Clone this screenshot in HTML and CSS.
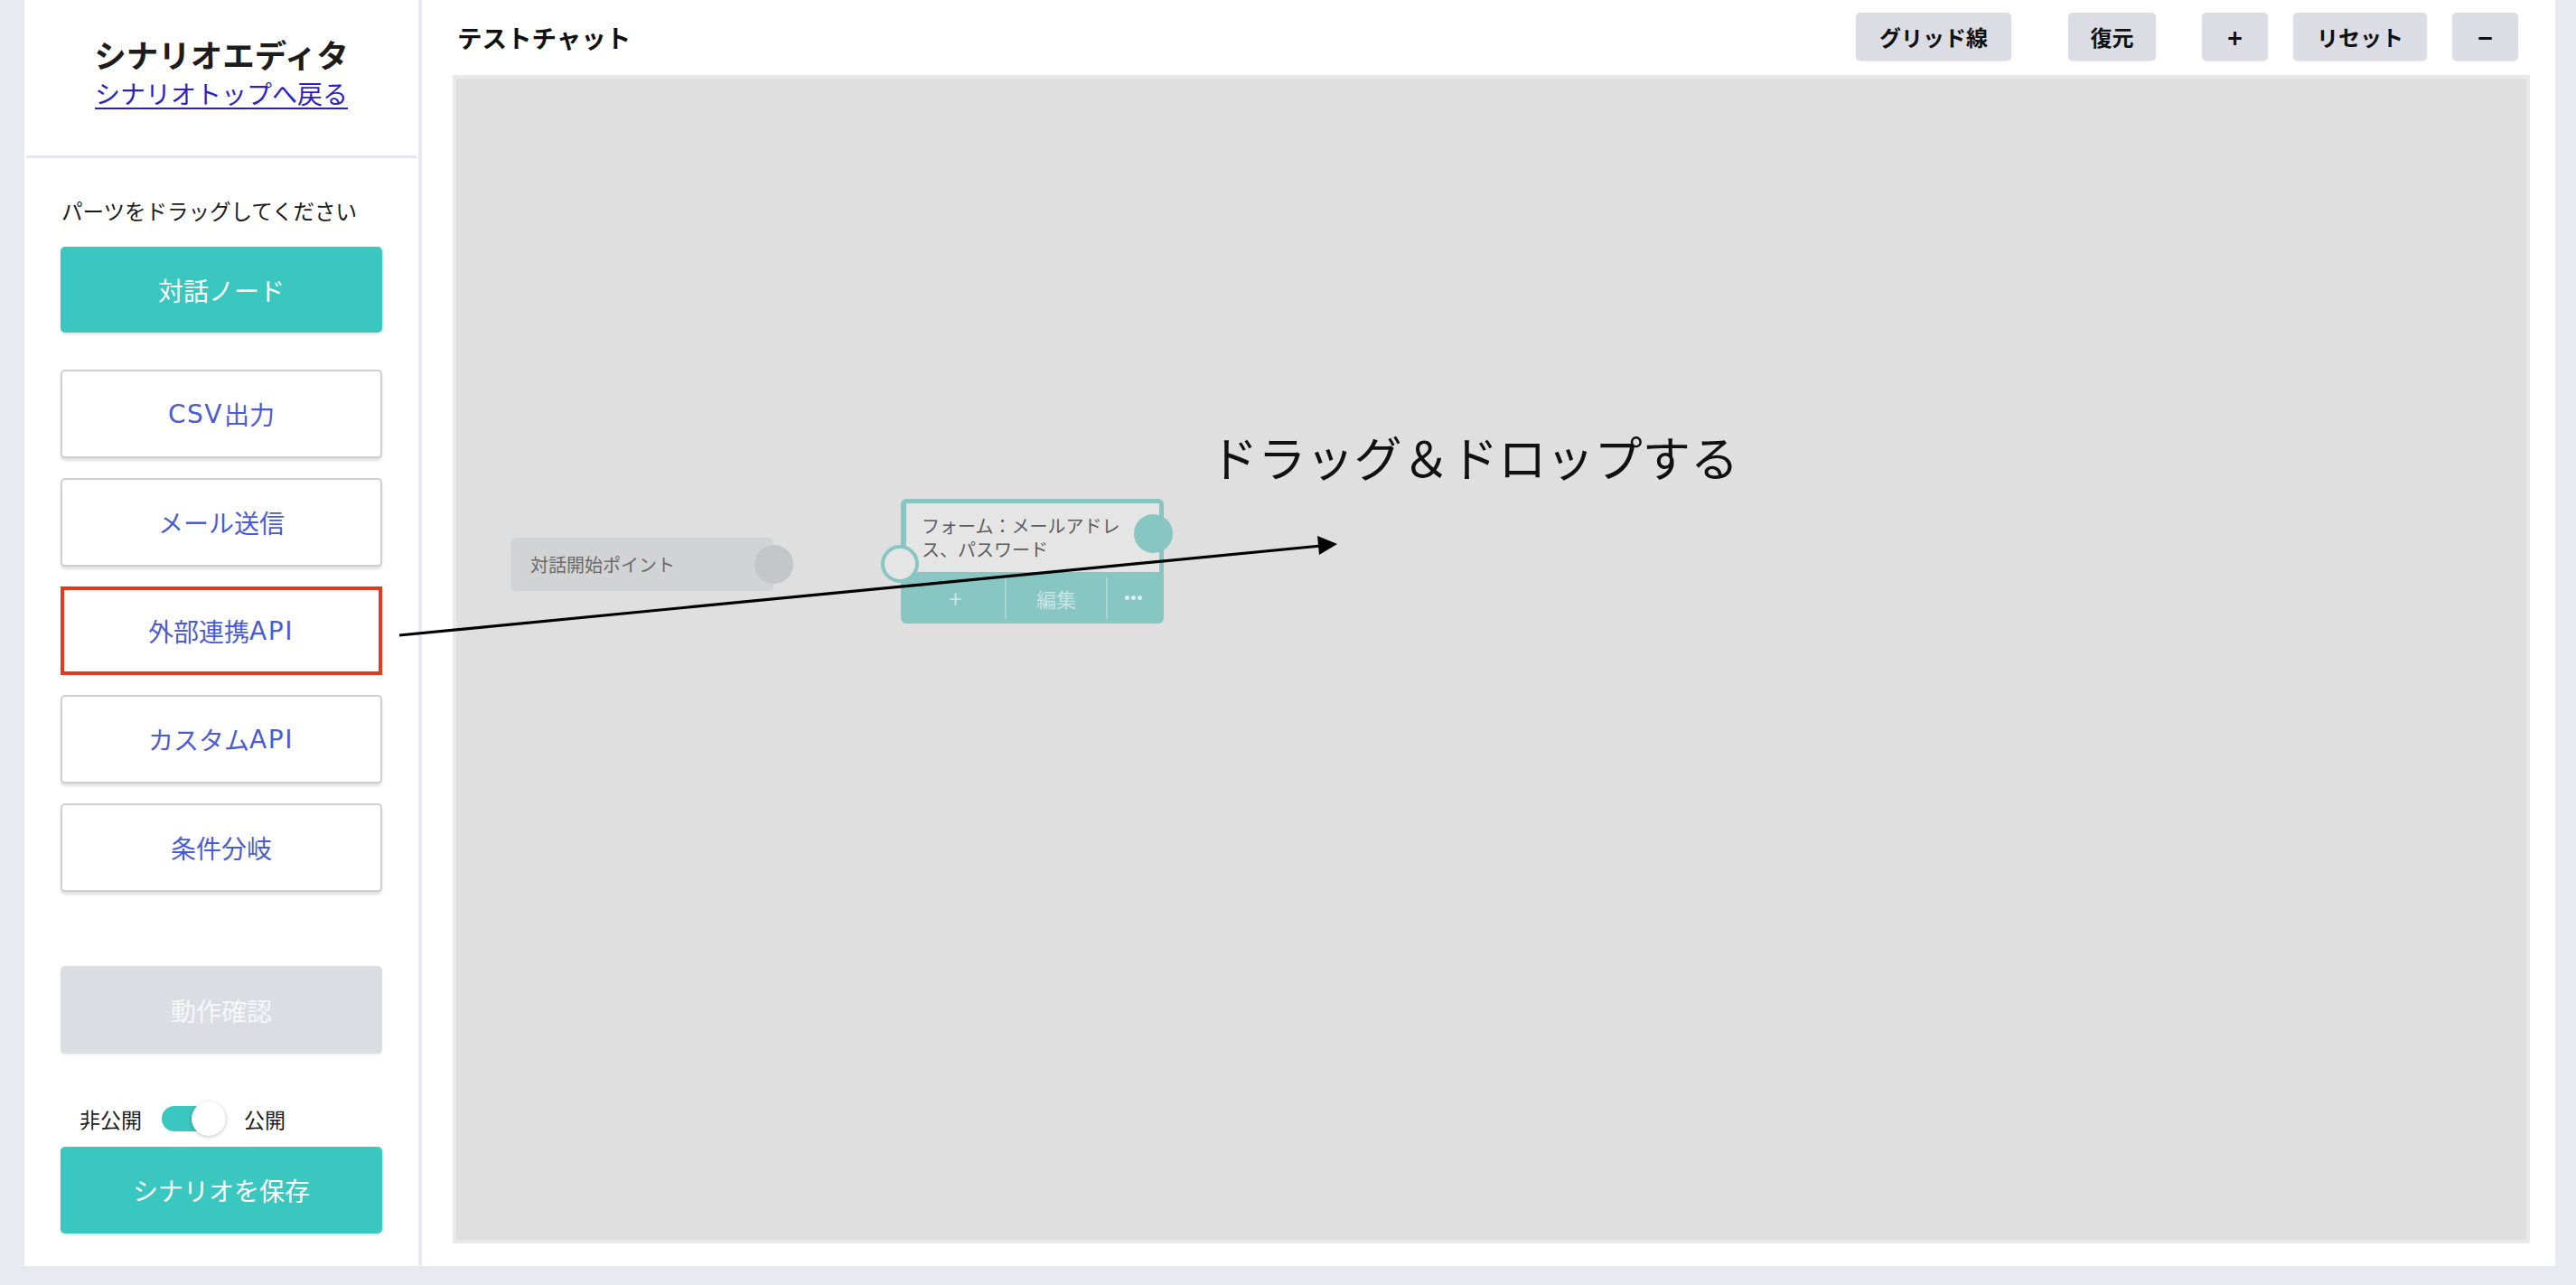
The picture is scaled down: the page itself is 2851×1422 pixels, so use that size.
FILE: index.html
```html
<!DOCTYPE html>
<html lang="ja">
<head>
<meta charset="utf-8">
<title>シナリオエディタ</title>
<link rel="stylesheet" href="styles.css">
</head>
<body>
<div class="app">
  <aside class="sidebar">
    <div class="sidebar-head">
      <h1 class="title">シナリオエディタ</h1>
      <a class="back-link" href="#">シナリオトップへ戻る</a>
    </div>
    <div class="parts">
      <p class="hint">パーツをドラッグしてください</p>
      <div class="btn btn-primary btn-node">対話ノード</div>
      <div class="part-list">
        <div class="btn btn-part"><span class="latin">CSV</span>出力</div>
        <div class="btn btn-part">メール送信</div>
        <div class="btn btn-part btn-highlight">外部連携<span class="latin">API</span></div>
        <div class="btn btn-part">カスタム<span class="latin">API</span></div>
        <div class="btn btn-part">条件分岐</div>
      </div>
      <div class="btn btn-disabled">動作確認</div>
      <div class="publish-row">
        <span class="publish-label">非公開</span>
        <span class="toggle"><span class="knob"></span></span>
        <span class="publish-label">公開</span>
      </div>
      <div class="btn btn-primary btn-save">シナリオを保存</div>
    </div>
  </aside>
  <main class="main">
    <header class="main-head">
      <h2 class="main-title">テストチャット</h2>
      <div class="tools">
        <button class="tool tool-grid">グリッド線</button>
        <button class="tool tool-restore">復元</button>
        <button class="tool tool-plus">+</button>
        <button class="tool tool-reset">リセット</button>
        <button class="tool tool-minus">−</button>
      </div>
    </header>
    <div class="canvas">
      <div class="node-start">
        <span class="node-start-label">対話開始ポイント</span>
        <span class="port port-start"></span>
      </div>
      <div class="node-form">
        <div class="node-form-body">フォーム：メールアドレ<br>ス、パスワード</div>
        <div class="node-form-actions">
          <span class="action action-add">+</span>
          <span class="action action-edit">編集</span>
          <span class="action action-more"><i class="dot"></i><i class="dot"></i><i class="dot"></i></span>
        </div>
        <span class="port port-in"></span>
        <span class="port port-out"></span>
      </div>
      <div class="drop-hint">ドラッグ＆ドロップする</div>
    </div>
  </main>
</div>
<svg class="drag-arrow" width="2851" height="1422" viewBox="0 0 2851 1422" xmlns="http://www.w3.org/2000/svg">
  <line x1="442" y1="703" x2="1462" y2="604" stroke="#000" stroke-width="3.2"/>
  <polygon points="1480,602 1458,593 1460,614" fill="#000"/>
</svg>
</body>
</html>
```

FILE: styles.css
```css
* {
  box-sizing: border-box;
}

html, body {
  margin: 0;
  padding: 0;
}

body {
  position: relative;
  width: 2851px;
  height: 1422px;
  background: #e8e9f1;
  font-family: "Open Sans", "Noto Sans CJK JP", sans-serif;
  color: #1a1a1a;
  overflow: hidden;
}

.app {
  display: flex;
  gap: 4px;
  padding-left: 27px;
  height: 1401px;
}

/* ---------- Sidebar ---------- */
.sidebar {
  width: 436px;
  height: 1401px;
  background: #fff;
  display: flex;
  flex-direction: column;
}

.sidebar-head {
  margin: 0 2px;
  padding-top: 38px;
  padding-bottom: 51px;
  border-bottom: 3px solid #e6e7ee;
  display: flex;
  flex-direction: column;
  align-items: center;
}

.title {
  margin: 0;
  font-family: "Noto Sans CJK JP", sans-serif;
  font-size: 35.5px;
  line-height: 44px;
  font-weight: 700;
  color: #1c1c1c;
}

.back-link {
  margin-top: 3px;
  font-family: "Noto Sans CJK JP", sans-serif;
  font-size: 28px;
  line-height: 36px;
  color: #2c1fc4;
  text-decoration: underline;
  text-underline-offset: 4px;
  text-decoration-thickness: 2px;
}

.parts {
  padding: 0 40px;
  display: flex;
  flex-direction: column;
}

.hint {
  margin: 42px 0 0 1px;
  font-family: "Noto Sans CJK JP", sans-serif;
  font-size: 23.5px;
  line-height: 32px;
  color: #1a1a1a;
}

.btn {
  display: flex;
  align-items: center;
  justify-content: center;
  font-family: "Noto Sans CJK JP", sans-serif;
  font-size: 28px;
  border-radius: 5px;
}

.latin {
  font-family: "DejaVu Sans", sans-serif;
  letter-spacing: 1.5px;
  margin-right: 1px;
}

.btn-primary {
  background: #3ac7bf;
  color: #fff;
  box-shadow: 0 2px 3px rgba(0, 0, 0, 0.12);
}

.btn-node {
  margin-top: 24px;
  height: 95px;
}

.part-list {
  margin-top: 41px;
  display: flex;
  flex-direction: column;
  gap: 22px;
}

.btn-part {
  height: 98px;
  background: #fff;
  border: 2px solid #cfcfd2;
  color: #4b5bd3;
  box-shadow: 0 3px 3px rgba(0, 0, 0, 0.12);
}

.btn-highlight {
  border: 4px solid #e2391f;
  border-radius: 0;
  box-shadow: none;
}

.btn-disabled {
  margin-top: 82px;
  height: 97px;
  background: #dcdde3;
  color: #f6f6f8;
  box-shadow: 0 2px 3px rgba(0, 0, 0, 0.06);
}

.publish-row {
  margin-top: 44px;
  height: 56px;
  padding-left: 21px;
  display: flex;
  align-items: center;
  font-family: "Noto Sans CJK JP", sans-serif;
  font-size: 23px;
  color: #1a1a1a;
}

.toggle {
  position: relative;
  margin: 0 20px 0 22px;
  width: 71px;
  height: 28px;
  border-radius: 14px;
  background: #3ac7bf;
}

.knob {
  position: absolute;
  right: 0;
  top: -5px;
  width: 38px;
  height: 38px;
  border-radius: 50%;
  background: #fff;
  box-shadow: 0 1px 4px rgba(0, 0, 0, 0.25);
}

.btn-save {
  margin-top: 3px;
  height: 96px;
}

/* ---------- Main ---------- */
.main {
  width: 2361px;
  height: 1401px;
  background: #fff;
  padding: 0 28px 25px 34px;
  display: flex;
  flex-direction: column;
}

.main-head {
  height: 83px;
  display: flex;
  align-items: center;
  justify-content: space-between;
  padding: 0 13px 0 5px;
}

.main-title {
  margin: 0;
  font-family: "Noto Sans CJK JP", sans-serif;
  font-size: 27.5px;
  font-weight: 700;
  color: #111;
  padding-bottom: 2px;
}

.tools {
  display: flex;
  align-items: center;
  padding-bottom: 2px;
}

.tool {
  height: 53px;
  border: none;
  border-radius: 5px;
  background: #dcdde4;
  box-shadow: 0 1px 2px rgba(0, 0, 0, 0.1);
  font-family: "Noto Sans CJK JP", sans-serif;
  font-size: 24px;
  font-weight: 700;
  color: #111;
  padding: 0;
}

.tool-grid { width: 172px; }
.tool-restore { width: 97px; margin-left: 63px; }
.tool-plus { width: 73px; margin-left: 51px; font-size: 28px; }
.tool-reset { width: 148px; margin-left: 28px; }
.tool-minus { width: 73px; margin-left: 28px; font-size: 28px; }

.canvas {
  position: relative;
  flex: 1;
  background: #dfdfdf;
  border: 4px solid #e9e9e9;
}

/* Nodes on the free canvas */
.node-start {
  position: absolute;
  left: 60px;
  top: 508px;
  width: 291px;
  height: 59px;
  background: #d2d3d5;
  border-radius: 6px;
  display: flex;
  align-items: center;
  padding-left: 22px;
}

.node-start-label {
  font-family: "Noto Sans CJK JP", sans-serif;
  font-size: 20px;
  color: #6a6a6c;
}

.port {
  position: absolute;
  border-radius: 50%;
}

.port-start {
  left: 270px;
  top: 8px;
  width: 43px;
  height: 43px;
  background: #c5c6c9;
}

.node-form {
  position: absolute;
  left: 492px;
  top: 465px;
  width: 291px;
  height: 138px;
  background: #87c6c3;
  border-radius: 6px;
  padding: 5px 5px 0 6px;
  display: flex;
  flex-direction: column;
}

.node-form-body {
  height: 76px;
  background: #e5e5e5;
  padding: 12px 0 0 17px;
  font-family: "Noto Sans CJK JP", sans-serif;
  font-size: 20px;
  line-height: 26px;
  color: #5c5c5c;
}

.node-form-actions {
  flex: 1;
  display: flex;
  align-items: center;
  color: #c8e5e3;
  font-family: "Noto Sans CJK JP", sans-serif;
  font-size: 22px;
}

.action {
  height: 46px;
  display: flex;
  align-items: center;
  justify-content: center;
}

.action-add { width: 111px; border-right: 2px solid #a8d6d3; font-size: 26px; }
.action-edit { width: 112px; border-right: 2px solid #a8d6d3; }
.action-more { flex: 1; gap: 2px; }

.dot {
  width: 5px;
  height: 5px;
  border-radius: 50%;
  background: #dcefee;
}

.port-in {
  left: -22px;
  top: 51px;
  width: 42px;
  height: 42px;
  border: 4px solid #87c6c3;
  background: #e5e5e5;
}

.port-out {
  left: 258px;
  top: 17px;
  width: 43px;
  height: 43px;
  background: #87c6c3;
}

.drop-hint {
  position: absolute;
  left: 834px;
  top: 388px;
  font-family: "Noto Sans CJK JP", sans-serif;
  font-size: 53.2px;
  line-height: 60px;
  color: #111;
  white-space: nowrap;
}

.drag-arrow {
  position: absolute;
  left: 0;
  top: 0;
  pointer-events: none;
}
```
